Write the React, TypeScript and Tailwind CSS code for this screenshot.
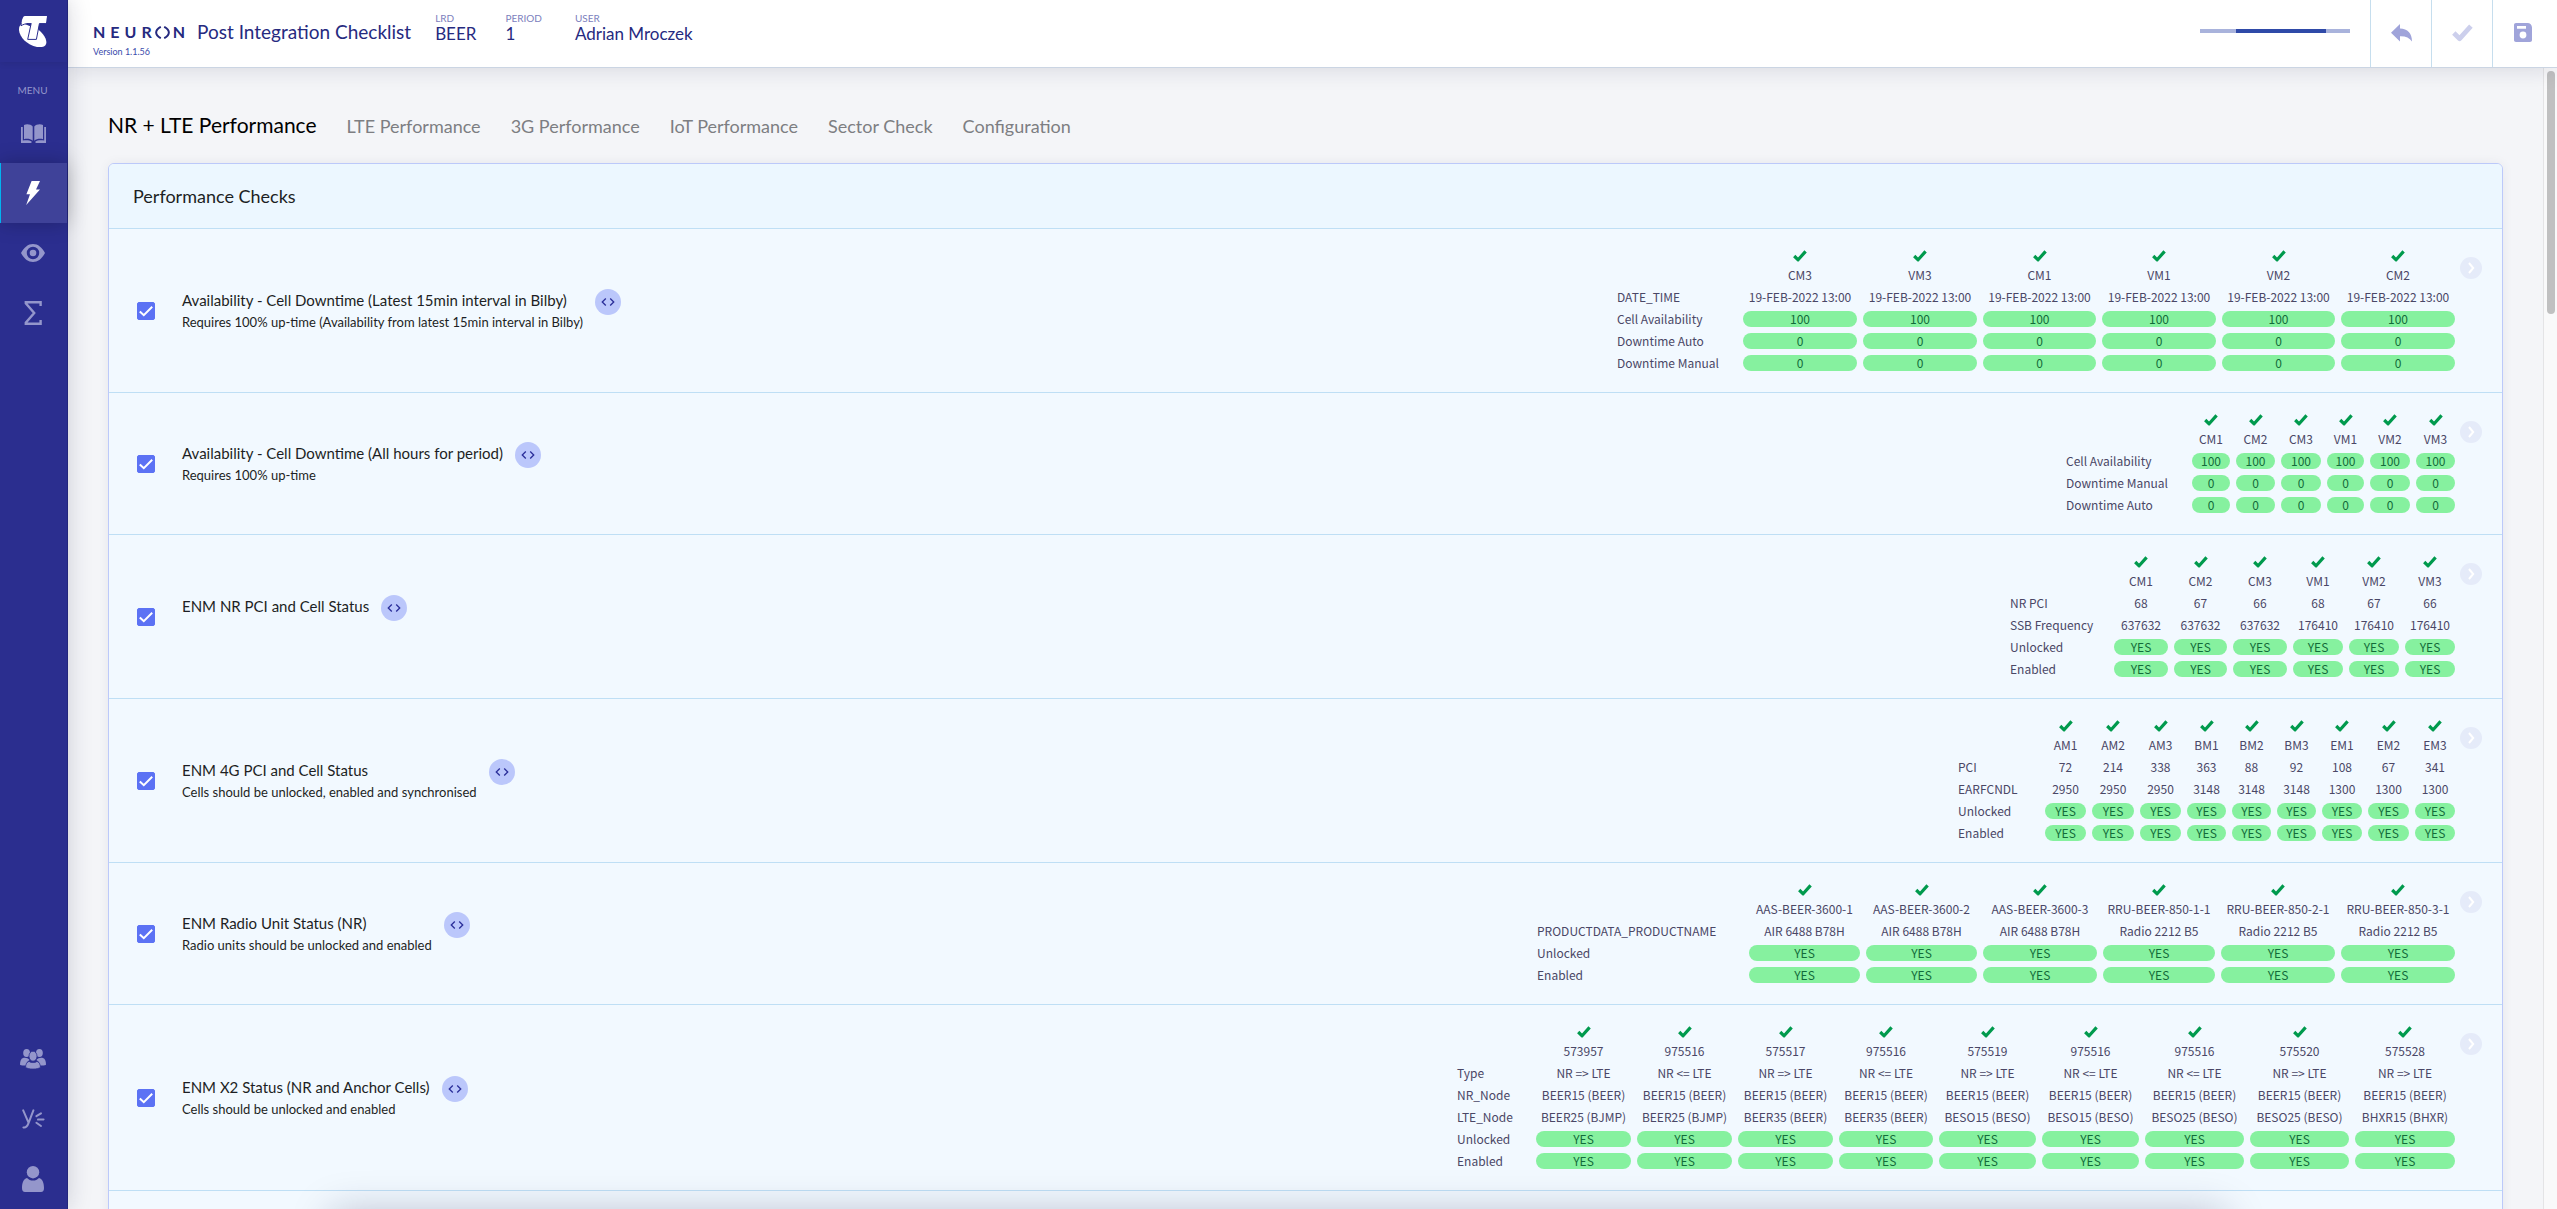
import type { ReactNode } from "react";
import clsx from "clsx";
import { MdCode } from "react-icons/md";

type Line = { label: string; values: string[]; pill?: boolean };

type Check = {
  id: string;
  title: string;
  description?: string;
  labelWidth: string;
  columns: { name: string; width: string }[];
  lines: Line[];
};

const fill = (value: string, count: number) => Array.from({ length: count }, () => value);

const checks: Check[] = [
  {
    id: "downtime-latest",
    title: "Availability - Cell Downtime (Latest 15min interval in Bilby)",
    description: "Requires 100% up-time (Availability from latest 15min interval in Bilby)",
    labelWidth: "w-[123px]",
    columns: [
      { name: "CM3", width: "w-[120px]" },
      { name: "VM3", width: "w-[120px]" },
      { name: "CM1", width: "w-[119px]" },
      { name: "VM1", width: "w-[120px]" },
      { name: "VM2", width: "w-[119px]" },
      { name: "CM2", width: "w-[120px]" },
    ],
    lines: [
      { label: "DATE_TIME", values: fill("19-FEB-2022 13:00", 6) },
      { label: "Cell Availability", values: fill("100", 6), pill: true },
      { label: "Downtime Auto", values: fill("0", 6), pill: true },
      { label: "Downtime Manual", values: fill("0", 6), pill: true },
    ],
  },
  {
    id: "downtime-all",
    title: "Availability - Cell Downtime (All hours for period)",
    description: "Requires 100% up-time",
    labelWidth: "w-[123px]",
    columns: [
      { name: "CM1", width: "w-[44px]" },
      { name: "CM2", width: "w-[45px]" },
      { name: "CM3", width: "w-[46px]" },
      { name: "VM1", width: "w-[43px]" },
      { name: "VM2", width: "w-[46px]" },
      { name: "VM3", width: "w-[45px]" },
    ],
    lines: [
      { label: "Cell Availability", values: fill("100", 6), pill: true },
      { label: "Downtime Manual", values: fill("0", 6), pill: true },
      { label: "Downtime Auto", values: fill("0", 6), pill: true },
    ],
  },
  {
    id: "nr-pci",
    title: "ENM NR PCI and Cell Status",
    labelWidth: "w-[101px]",
    columns: [
      { name: "CM1", width: "w-[60px]" },
      { name: "CM2", width: "w-[59px]" },
      { name: "CM3", width: "w-[60px]" },
      { name: "VM1", width: "w-[56px]" },
      { name: "VM2", width: "w-[56px]" },
      { name: "VM3", width: "w-[56px]" },
    ],
    lines: [
      { label: "NR PCI", values: ["68", "67", "66", "68", "67", "66"] },
      { label: "SSB Frequency", values: [...fill("637632", 3), ...fill("176410", 3)] },
      { label: "Unlocked", values: fill("YES", 6), pill: true },
      { label: "Enabled", values: fill("YES", 6), pill: true },
    ],
  },
  {
    id: "4g-pci",
    title: "ENM 4G PCI and Cell Status",
    description: "Cells should be unlocked, enabled and synchronised",
    labelWidth: "w-[84px]",
    columns: [
      { name: "AM1", width: "w-[47px]" },
      { name: "AM2", width: "w-[48px]" },
      { name: "AM3", width: "w-[47px]" },
      { name: "BM1", width: "w-[45px]" },
      { name: "BM2", width: "w-[45px]" },
      { name: "BM3", width: "w-[45px]" },
      { name: "EM1", width: "w-[46px]" },
      { name: "EM2", width: "w-[47px]" },
      { name: "EM3", width: "w-[46px]" },
    ],
    lines: [
      { label: "PCI", values: ["72", "214", "338", "363", "88", "92", "108", "67", "341"] },
      { label: "EARFCNDL", values: [...fill("2950", 3), ...fill("3148", 3), ...fill("1300", 3)] },
      { label: "Unlocked", values: fill("YES", 9), pill: true },
      { label: "Enabled", values: fill("YES", 9), pill: true },
    ],
  },
  {
    id: "radio-unit",
    title: "ENM Radio Unit Status (NR)",
    description: "Radio units should be unlocked and enabled",
    labelWidth: "w-[209px]",
    columns: [
      { name: "AAS-BEER-3600-1", width: "w-[117px]" },
      { name: "AAS-BEER-3600-2", width: "w-[117px]" },
      { name: "AAS-BEER-3600-3", width: "w-[120px]" },
      { name: "RRU-BEER-850-1-1", width: "w-[118px]" },
      { name: "RRU-BEER-850-2-1", width: "w-[120px]" },
      { name: "RRU-BEER-850-3-1", width: "w-[120px]" },
    ],
    lines: [
      { label: "PRODUCTDATA_PRODUCTNAME", values: [...fill("AIR 6488 B78H", 3), ...fill("Radio 2212 B5", 3)] },
      { label: "Unlocked", values: fill("YES", 6), pill: true },
      { label: "Enabled", values: fill("YES", 6), pill: true },
    ],
  },
  {
    id: "x2-status",
    title: "ENM X2 Status (NR and Anchor Cells)",
    description: "Cells should be unlocked and enabled",
    labelWidth: "w-[76px]",
    columns: [
      { name: "573957", width: "w-[101px]" },
      { name: "975516", width: "w-[101px]" },
      { name: "575517", width: "w-[101px]" },
      { name: "975516", width: "w-[100px]" },
      { name: "575519", width: "w-[103px]" },
      { name: "975516", width: "w-[103px]" },
      { name: "975516", width: "w-[105px]" },
      { name: "575520", width: "w-[105px]" },
      { name: "575528", width: "w-[106px]" },
    ],
    lines: [
      {
        label: "Type",
        values: ["NR => LTE", "NR <= LTE", "NR => LTE", "NR <= LTE", "NR => LTE", "NR <= LTE", "NR <= LTE", "NR => LTE", "NR => LTE"],
      },
      { label: "NR_Node", values: fill("BEER15 (BEER)", 9) },
      {
        label: "LTE_Node",
        values: [
          "BEER25 (BJMP)",
          "BEER25 (BJMP)",
          "BEER35 (BEER)",
          "BEER35 (BEER)",
          "BESO15 (BESO)",
          "BESO15 (BESO)",
          "BESO25 (BESO)",
          "BESO25 (BESO)",
          "BHXR15 (BHXR)",
        ],
      },
      { label: "Unlocked", values: fill("YES", 9), pill: true },
      { label: "Enabled", values: fill("YES", 9), pill: true },
    ],
  },
];

const tabs = ["NR + LTE Performance", "LTE Performance", "3G Performance", "IoT Performance", "Sector Check", "Configuration"];

function TickIcon({ className }: { className?: string }) {
  return (
    <svg viewBox="0 0 14 12" fill="none" stroke="currentColor" strokeLinejoin="round" className={className}>
      <path d="M1.2 6 L5.1 9.8 L12.6 1.4" strokeWidth="3.2" />
    </svg>
  );
}

function BrandLogo() {
  return (
    <svg viewBox="0 0 28 31" className="w-7 h-[31px]">
      <path
        d="M4.5 7.5 C1 8 0 10.5 0 14 C0.5 21 8 29 18 31 C24 31.6 27.6 30.5 27.4 26 C27 21 22.5 16 19 13.5 Z"
        fill="#fff"
      />
      <path
        d="M6.2 0 H28 L26.8 7.6 H20.4 L17.4 23.4 H8.7 L12.2 7.4 H10 C7.4 7.4 4 8.4 2 9.8 C2.4 4.5 3.5 0.4 6.2 0 Z"
        fill="#fff"
        stroke="#2b2e8f"
        strokeWidth="1"
      />
      <path d="M6 0 H28 L27 7 H2.6 C3 4 3.8 0.4 6 0 Z" fill="#fff" />
    </svg>
  );
}

function BookIcon() {
  return (
    <svg viewBox="0 0 25 19" fill="currentColor" className="w-[25px] h-[19px]">
      <path d="M3 1 C6 -0.4 10 0.4 11.7 2.6 V16.8 C9.5 14.8 6 14.4 3 15.2 Z" />
      <path d="M22 1 C19 -0.4 15 0.4 13.3 2.6 V16.8 C15.5 14.8 19 14.4 22 15.2 Z" />
      <path d="M0 3 H1.8 V16.6 C5 15.8 8.6 16 10.6 17.6 L10.4 19 H0 Z" />
      <path d="M25 3 H23.2 V16.6 C20 15.8 16.4 16 14.4 17.6 L14.6 19 H25 Z" />
    </svg>
  );
}

function BoltIcon() {
  return (
    <svg viewBox="0 0 14 24" fill="currentColor" className="w-[14px] h-6">
      <path d="M5.6 0 H14 L10 8.4 H14 L0.2 24 L4 13.3 H0.4 Z" />
    </svg>
  );
}

function EyeIcon() {
  return (
    <svg viewBox="0 0 24 18" fill="currentColor" className="w-6 h-[18px]">
      <path
        fillRule="evenodd"
        d="M0 9 C3 3.4 7 0 12 0 C17 0 21 3.4 24 9 C21 14.6 17 18 12 18 C7 18 3 14.6 0 9 Z M12 2.8 A6.2 6.2 0 1 0 12 15.2 A6.2 6.2 0 1 0 12 2.8 Z"
      />
      <circle cx="12" cy="9" r="3.3" />
    </svg>
  );
}

function SigmaIcon() {
  return (
    <svg viewBox="0 0 18 24" fill="none" stroke="currentColor" strokeWidth="2.4" className="w-[18px] h-6">
      <path d="M16.6 5 V1.3 H1.8 V2.4 L10.2 12 L1.8 21.6 V22.7 H16.6 V19" />
    </svg>
  );
}

function PeopleIcon() {
  return (
    <svg viewBox="0 0 26 20" fill="currentColor" className="w-[26px] h-5">
      <ellipse cx="6.6" cy="4" rx="3.4" ry="4" />
      <ellipse cx="19.4" cy="4" rx="3.4" ry="4" />
      <path d="M3 9 C5 8.4 8 8.8 9.6 11 C7.4 12 6.4 13.8 6 16.4 C3 16.6 0 16.4 0 15.4 C0 12.4 1 9.6 3 9 Z" />
      <path d="M23 9 C21 8.4 18 8.8 16.4 11 C18.6 12 19.6 13.8 20 16.4 C23 16.6 26 16.4 26 15.4 C26 12.4 25 9.6 23 9 Z" />
      <path
        d="M9 12.4 C11 14 15 14 17 12.4 C19 13 20.4 15 20.4 18.2 C18.6 20.6 7.4 20.6 5.6 18.2 C5.6 15 7 13 9 12.4 Z"
        stroke="#2b2e8f"
        strokeWidth="0.7"
      />
      <ellipse cx="13" cy="7.2" rx="4" ry="5" stroke="#2b2e8f" strokeWidth="0.8" />
    </svg>
  );
}

function YammerIcon() {
  return (
    <svg viewBox="0 0 23 20" fill="none" stroke="currentColor" strokeWidth="2" strokeLinecap="round" className="w-[23px] h-5">
      <path d="M1.2 1.4 L6.4 13.4 M11.4 1.4 L6.4 14.4 C5.2 17.8 4 18.8 1.4 18.4" />
      <path d="M14.4 7.2 L19 4.4 M16 10.6 L21.6 10.4 M14.4 13.8 L19 17" />
    </svg>
  );
}

function PersonIcon() {
  return (
    <svg viewBox="0 0 22 26" fill="currentColor" className="w-[22px] h-[26px]">
      <circle cx="11" cy="6.2" r="6.2" />
      <path d="M5 12 C8 15.4 14 15.4 17 12 C20.6 13 22 17 22 22 C22 24.8 21 26 19 26 H3 C1 26 0 24.8 0 22 C0 17 1.4 13 5 12 Z" />
    </svg>
  );
}

function UndoIcon() {
  return (
    <svg viewBox="0 0 21 18" fill="currentColor" className="w-[21px] h-[18px]">
      <path d="M0 8.8 L9 0 V4.6 C16.6 4.6 21 9.6 21 17.4 C18.4 13.6 14.6 12 9 12.2 V17.4 Z" />
    </svg>
  );
}

function SaveIcon() {
  return (
    <svg viewBox="0 0 18 19" fill="currentColor" className="w-[18px] h-[19px]">
      <path
        fillRule="evenodd"
        d="M2 0 H13.6 C16 0 18 2 18 4.6 V17 C18 18.2 17.2 19 16 19 H2 C0.8 19 0 18.2 0 17 V2 C0 0.8 0.8 0 2 0 Z M3 3 V5.8 H12 V3 Z M9 8.6 A3.4 3.4 0 1 0 9 15.4 A3.4 3.4 0 1 0 9 8.6 Z"
      />
    </svg>
  );
}

function Wordmark() {
  return (
    <div className="flex items-center gap-[5px] h-[14px] text-[16px] leading-[14px] font-bold">
      <span>N</span>
      <span>E</span>
      <span>U</span>
      <span>R</span>
      <svg viewBox="0 0 15 13" fill="none" stroke="currentColor" strokeWidth="2" className="w-[15px] h-[13px] -mx-0.5">
        <path d="M5.8 0.8 C-0.4 4 -0.4 9 5.8 12.2" />
        <path d="M9.2 0.8 C15.4 4 15.4 9 9.2 12.2" />
      </svg>
      <span>N</span>
    </div>
  );
}

function SideLink({ label, active, children }: { label: string; active?: boolean; children: ReactNode }) {
  return (
    <a
      href="#"
      aria-label={label}
      className={clsx(
        "flex items-center justify-center h-[60px] border-l pr-0.5",
        active
          ? "bg-[#3f4299] border-[#00b4f0] text-white shadow-[0_0_20px_rgba(0,0,0,0.25)]"
          : "border-transparent text-[#9496cb]"
      )}
    >
      {children}
    </a>
  );
}

function Sidebar() {
  return (
    <aside className="relative z-20 flex flex-col w-[68px] shrink-0 bg-[#2b2e8f] border-r border-[#23267c] shadow-[0_0_24px_rgba(20,24,60,0.18)]">
      <div className="flex items-center justify-center h-[62px] pr-0.5 shadow-[0_2px_6px_rgba(0,0,0,0.08)]">
        <BrandLogo />
      </div>
      <p className="h-[41px] pt-5 pr-0.5 text-center text-[10px] leading-4 text-[#9496cb]">MENU</p>
      <nav aria-label="Main" className="flex flex-col grow">
        <SideLink label="Library">
          <BookIcon />
        </SideLink>
        <SideLink label="Checklists" active>
          <BoltIcon />
        </SideLink>
        <SideLink label="Monitor">
          <EyeIcon />
        </SideLink>
        <SideLink label="Totals">
          <SigmaIcon />
        </SideLink>
        <div className="mt-auto">
          <SideLink label="Team">
            <PeopleIcon />
          </SideLink>
          <SideLink label="Yammer">
            <YammerIcon />
          </SideLink>
          <SideLink label="Profile">
            <PersonIcon />
          </SideLink>
        </div>
      </nav>
    </aside>
  );
}

function Meta({ label, value }: { label: string; value: string }) {
  return (
    <div>
      <dt className="text-[10px] leading-3 text-[#7c80bd]">{label}</dt>
      <dd className="text-[17px] leading-5 text-[#262a7f]">{value}</dd>
    </div>
  );
}

function Topbar() {
  return (
    <header className="relative z-10 flex items-stretch h-[68px] shrink-0 bg-white border-b border-[#cbd5e3] pr-1 shadow-[0_0_24px_rgba(20,24,60,0.14)]">
      <div className="pl-[25px] pt-[22px] text-[#262a7f]">
        <div className="flex items-center gap-3 h-5">
          <Wordmark />
          <h1 className="text-[19px] leading-5">Post Integration Checklist</h1>
        </div>
        <p className="mt-1 text-[9px] leading-3 text-[#3b4bab]">Version 1.1.56</p>
      </div>
      <dl className="flex gap-[29px] pl-6 pt-3">
        <Meta label="LRD" value="BEER" />
        <Meta label="PERIOD" value="1" />
        <div className="pl-1">
          <Meta label="USER" value="Adrian Mroczek" />
        </div>
      </dl>
      <div className="flex ml-auto">
        <div role="progressbar" aria-label="Loading" className="flex w-[150px] h-1 mt-[29px] mr-5 bg-[#a9b3dc]">
          <div className="w-3/5 ml-9 bg-[#2f4aa8]" />
        </div>
        <button aria-label="Undo" className="flex items-center justify-center w-[61px] pb-0.5 border-l border-[#c6deee] text-[#a0a4da]">
          <UndoIcon />
        </button>
        <button aria-label="Approve" className="flex items-center justify-center w-[61px] pb-0.5 border-l border-[#c6deee] text-[#cccfec]">
          <TickIcon className="w-[21px] h-[18px]" />
        </button>
        <button aria-label="Save" className="flex items-center justify-center w-[61px] pb-0.5 border-l border-[#c6deee] text-[#a0a4da]">
          <SaveIcon />
        </button>
      </div>
    </header>
  );
}

function ResultTable({ check }: { check: Check }) {
  return (
    <table
      aria-label={check.title}
      className="border-separate border-spacing-0 font-['Noto_Sans_CJK_JP','Lato',sans-serif] text-xs leading-4 text-[#4a4766] whitespace-nowrap"
    >
      <thead>
        <tr>
          <td className={clsx("p-0", check.labelWidth)} />
          {check.columns.map((column, i) => (
            <td key={i} className={clsx("h-[17px] p-0", column.width)}>
              <TickIcon className="w-[14px] h-3 mx-auto text-[#009a4d]" />
            </td>
          ))}
        </tr>
        <tr>
          <td className="p-0" />
          {check.columns.map((column, i) => (
            <th key={i} scope="col" className="h-[22px] p-0 font-normal text-center">
              {column.name}
            </th>
          ))}
        </tr>
      </thead>
      <tbody>
        {check.lines.map((line) => (
          <tr key={line.label}>
            <th scope="row" className="h-[22px] p-0 font-normal text-left">
              {line.label}
            </th>
            {line.values.map((value, i) => (
              <td key={i} className="px-[3px] py-0 text-center">
                {line.pill ? <span className="block rounded-full bg-[#86f19f] text-[#126b3a]">{value}</span> : value}
              </td>
            ))}
          </tr>
        ))}
      </tbody>
    </table>
  );
}

function CheckRow({ check }: { check: Check }) {
  return (
    <li className="flex items-center pl-7 pr-5 py-[18px] border-b border-[#bfdff5] bg-[#f2f9ff]">
      <span className="grid mr-[27px]">
        <input
          id={check.id}
          type="checkbox"
          defaultChecked
          className="peer col-start-1 row-start-1 appearance-none w-[18px] h-[18px] rounded-xs border border-[#5c72f4] checked:bg-[#5c72f4]"
        />
        <svg
          viewBox="0 0 18 18"
          fill="none"
          stroke="#fff"
          strokeWidth="2"
          className="col-start-1 row-start-1 w-[18px] h-[18px] pointer-events-none opacity-0 peer-checked:opacity-100"
        >
          <path d="M2.8 9.4 L6.8 13.2 L15.2 4.8" />
        </svg>
      </span>
      <label htmlFor={check.id} className="flex flex-col h-11 text-[#1d1f24]">
        <span className="text-[15px] leading-[22px]">{check.title}</span>
        {check.description && <span className="text-[13px] leading-[22px]">{check.description}</span>}
      </label>
      <button
        aria-label={`Show query for ${check.title}`}
        className="flex items-center justify-center w-[26px] h-[26px] ml-3 mb-[18px] rounded-full bg-[#bbc7fb] text-[#2b2e9a]"
      >
        <MdCode className="w-4 h-4" />
      </button>
      <div className="flex items-start gap-0.5 ml-auto">
        <ResultTable check={check} />
        <button aria-label={`Open ${check.title}`} className="mt-[10px]">
          <svg viewBox="0 0 22 22" fill="none" className="w-[22px] h-[22px]">
            <circle cx="11" cy="11" r="11" fill="#e5ebf9" />
            <path d="M9 6 L13.2 11 L9 16" stroke="#fff" strokeWidth="2" />
          </svg>
        </button>
      </div>
    </li>
  );
}

export default function App() {
  return (
    <div className="flex h-screen overflow-hidden bg-[#f4f5f8] font-['Lato','Open_Sans',sans-serif] antialiased">
      <Sidebar />
      <div className="flex flex-col grow min-w-0">
        <Topbar />
        <div className="flex grow min-h-0">
          <main className="grow min-w-0 px-10 pt-10 overflow-hidden">
            <nav aria-label="Checklist sections" className="flex items-baseline gap-[30px] mb-5">
              {tabs.map((tab, i) => (
                <button
                  key={tab}
                  className={clsx("leading-[34px]", i === 0 ? "text-[21px] text-black" : "text-[18px] text-[#7d7e82]")}
                >
                  {tab}
                </button>
              ))}
            </nav>
            <section className="rounded-md border border-[#bcc9fa] bg-[#f2f9ff] overflow-hidden shadow-[0_0_12px_rgba(20,24,60,0.06)]">
              <h2 className="pl-6 border-b border-[#bfdff5] bg-[#ecf7ff] text-[18px] leading-[64px] text-[#1d1f24]">
                Performance Checks
              </h2>
              <ul>
                {checks.map((check) => (
                  <CheckRow key={check.id} check={check} />
                ))}
              </ul>
              <div className="h-40" />
            </section>
          </main>
          <div className="w-[14px] shrink-0 border-l border-[#e4e4e6] bg-[#f9f9fa] pt-[3px] pl-[3px]">
            <div className="w-2 h-[243px] rounded-full bg-[#c0c0c1]" />
          </div>
        </div>
      </div>
      <div className="fixed inset-x-[13%] top-full mt-1 h-16 bg-white shadow-[0_0_40px_rgba(15,20,60,0.26)]" />
    </div>
  );
}
